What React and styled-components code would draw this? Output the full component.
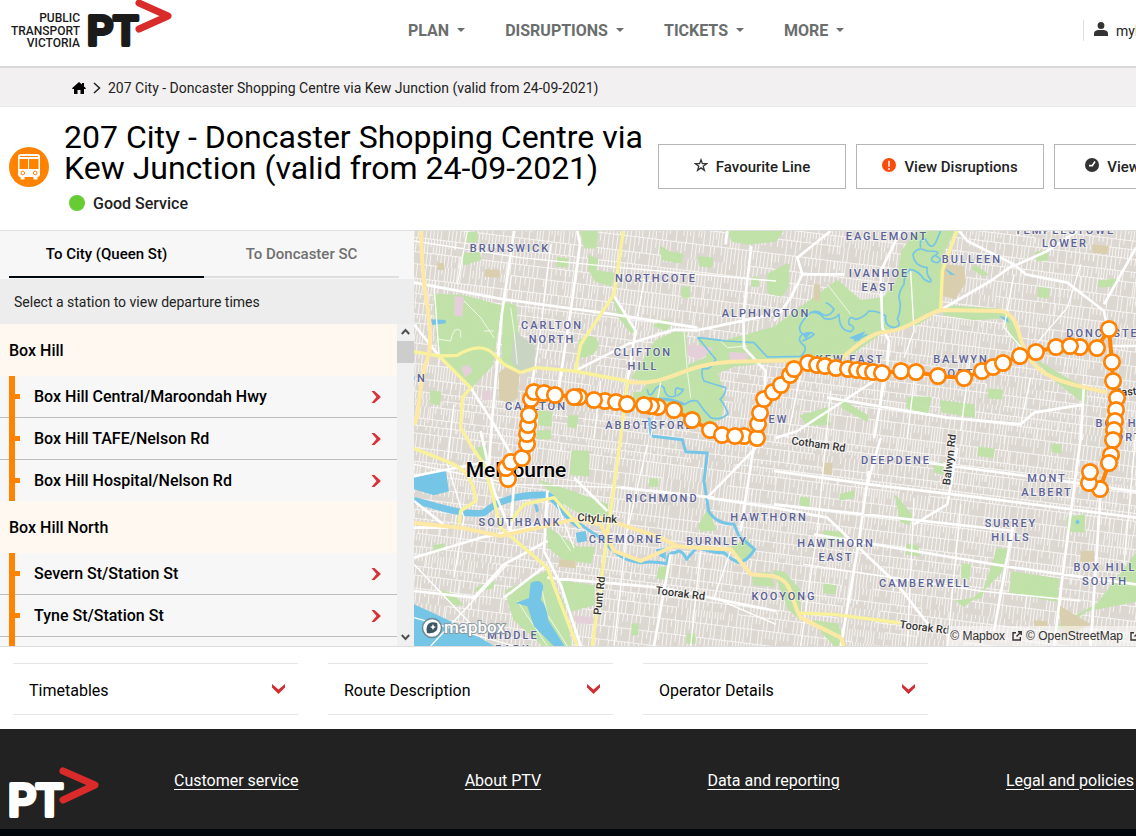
import React from "react";
import styled, { createGlobalStyle } from "styled-components";

const GlobalStyle = createGlobalStyle`
  *, *::before, *::after { box-sizing: border-box; }
  body {
    margin: 0;
    overflow-x: hidden;
    background: #fff;
    color: #222;
    font-family: Roboto, "Liberation Sans", sans-serif;
    font-size: 16px;
  }
  h1, h2, ul { margin: 0; padding: 0; font-weight: 400; }
  ul { list-style: none; }
  a { color: inherit; text-decoration: none; }
  button { font: inherit; color: inherit; cursor: pointer; }
  svg { display: block; flex: none; }
`;

/* ---------- header ---------- */

const Header = styled.header`
  display: flex;
  align-items: flex-start;
  height: 68px;
  padding-left: 9px;
  overflow: hidden;
  border-bottom: 2px solid #d9d9d9;
`;

const MainNav = styled.nav`
  display: flex;
  gap: 40px;
  margin-left: 236px;
  padding-top: 20px;
`;

const NavButton = styled.button`
  display: flex;
  align-items: center;
  gap: 8px;
  padding: 0;
  border: 0;
  background: none;
  color: #6a6e6d;
  font-size: 16px;
  font-weight: 700;
  line-height: 22px;
  white-space: nowrap;
`;

const Caret = styled.span`
  margin-bottom: 3px;
  border: 4px solid transparent;
  border-top-color: #6a6e6d;
  border-bottom: 0;
`;

const Account = styled.a`
  display: flex;
  flex: none;
  align-items: center;
  gap: 8px;
  width: 53px;
  height: 21px;
  margin: 20px 0 0 auto;
  padding-left: 10px;
  border-left: 1px solid #ddd;
  font-size: 14px;
  white-space: nowrap;
`;

const Breadcrumb = styled.nav`
  display: flex;
  align-items: center;
  gap: 7px;
  height: 39px;
  padding: 2px 0 0 72px;
  border-bottom: 1px solid #e6e6e6;
  background: #f2f0f0;
  font-size: 14px;
`;

/* ---------- line heading ---------- */

const LineHeader = styled.section`
  display: flex;
  align-items: flex-start;
  height: 124px;
  padding-left: 9px;
  overflow: hidden;
  border-bottom: 1px solid #dedede;

  > svg { margin-top: 40px; }
`;

const LineInfo = styled.div`
  flex: 0 0 584px;
  margin-left: 15px;
  padding-top: 15px;
`;

const LineTitle = styled.h1`
  color: #000;
  font-size: 32px;
  line-height: 31px;
`;

const Status = styled.p`
  display: flex;
  align-items: center;
  gap: 8px;
  margin: 8px 0 0 5px;
  font-weight: 500;
  line-height: 24px;

  &::before {
    content: "";
    width: 16px;
    height: 16px;
    margin-bottom: 3px;
    border-radius: 50%;
    background: #66cc33;
  }
`;

const Actions = styled.div`
  display: flex;
  flex: none;
  gap: 10px;
  margin: 37px 0 0 10px;
`;

const ActionButton = styled.button`
  display: flex;
  align-items: center;
  justify-content: center;
  gap: 8px;
  width: 188px;
  height: 45px;
  padding: 0;
  border: 1px solid #b5b5b5;
  background: #fff;
  font-size: 15px;
  font-weight: 500;
  white-space: nowrap;
`;

/* ---------- stops and map ---------- */

const Explorer = styled.section`
  display: grid;
  grid-template-columns: 414px 1fr;
  height: 416px;
  border-bottom: 1px solid #dedede;
`;

const StopsPanel = styled.div`
  display: flex;
  flex-direction: column;
  min-height: 0;
  background: #f7f7f7;
`;

const Tabs = styled.div`
  display: flex;
  flex: none;
  height: 48px;
  padding: 0 15px 0 9px;
`;

const Tab = styled.button`
  flex: 1;
  height: 47px;
  padding: 0;
  border: 0;
  border-bottom: 2px solid ${(p) => (p.$active ? "#00070d" : "#dedede")};
  background: none;
  color: ${(p) => (p.$active ? "#000" : "#707070")};
  font-size: 15px;
  font-weight: 500;
`;

const Hint = styled.p`
  flex: none;
  height: 45px;
  margin: 0;
  padding-left: 14px;
  background: #ededed;
  font-size: 14px;
  line-height: 47px;
`;

const ScrollArea = styled.div`
  display: grid;
  grid-template-columns: 1fr 17px;
  flex: 1;
  min-height: 0;
  overflow: hidden;
`;

const StopScroller = styled.div`
  height: 322px;
  overflow: hidden;
`;

const ScrollTrack = styled.div`
  display: flex;
  flex-direction: column;
  align-items: center;
  height: 322px;
  padding: 4px 0 5px;
  background: #f0f0f0;
`;

const ScrollThumb = styled.div`
  width: 17px;
  height: 22px;
  margin: 5px 0 auto;
  background: #cdcdcd;
`;

const Suburb = styled.h2`
  height: 52px;
  padding-left: 9px;
  background: #fff8f1;
  color: #000;
  font-size: 16px;
  font-weight: 500;
  line-height: 54px;
`;

const StopList = styled.ul`
  position: relative;

  &::before {
    content: "";
    position: absolute;
    top: 0;
    bottom: 0;
    left: 9px;
    width: 6px;
    background: #ff8200;
  }
`;

const StopItem = styled.li`
  display: flex;
  align-items: center;
  padding-left: 15px;
  border-bottom: 1px solid #bdbdbd;

  &:last-child { border-bottom: 0; }
  &::before {
    content: "";
    width: 5px;
    height: 5px;
    background: #ff8200;
  }
`;

const StopLink = styled.a`
  display: flex;
  flex: 1;
  align-items: center;
  justify-content: space-between;
  height: 41px;
  padding: 0 16px 0 14px;
  color: #000;
  font-weight: 500;
`;

const MapPane = styled.div`
  position: relative;
  min-width: 0;
  overflow: hidden;
  background: #ddd7d1;

  > svg { width: 100%; height: 100%; }
`;

const Attribution = styled.div`
  position: absolute;
  right: -4px;
  bottom: 0;
  display: flex;
  align-items: center;
  gap: 4px;
  height: 20px;
  padding-left: 4px;
  background: rgba(255, 255, 255, 0.5);
  color: #333;
  font-family: "Liberation Sans", sans-serif;
  font-size: 12px;
  white-space: nowrap;

  a { display: flex; align-items: center; gap: 7px; }
`;

const MapLogo = styled.a`
  position: absolute;
  left: 6px;
  bottom: 6px;
`;

/* ---------- details and footer ---------- */

const Details = styled.section`
  display: flex;
  gap: 30px;
  padding: 16px 0 14px 13px;
`;

const DetailButton = styled.button`
  display: flex;
  flex: 0 0 calc(25vw + 1px);
  align-items: center;
  justify-content: space-between;
  height: 52px;
  padding: 2px 13px 0 16px;
  border: 0;
  border-top: 1px solid #e6e6e6;
  border-bottom: 1px solid #e6e6e6;
  background: none;
  color: #000;
`;

const Footer = styled.footer`
  display: flex;
  align-items: center;
  height: 107px;
  padding: 2px 2px 0 9px;
  border-bottom: 7px solid #00070d;
  background: #222;
  color: #fff;

  > svg { margin-top: 26px; }
`;

const FooterLinks = styled.nav`
  display: flex;
  flex: 1;
  justify-content: space-between;
  margin-left: 75px;

  a {
    text-decoration: underline;
    text-underline-offset: 3px;
  }
`;

/* ---------- icons ---------- */

const PtvLogo = () => (
  <svg width="163" height="52" viewBox="9 0 163 52" role="img" aria-label="Public Transport Victoria">
    <g fill="#1b1b1b" fontFamily="Roboto, sans-serif">
      <g fontSize="12" fontWeight="500" textAnchor="end">
        <text x="80" y="22">PUBLIC</text>
        <text x="80" y="35">TRANSPORT</text>
        <text x="80" y="47">VICTORIA</text>
      </g>
      <text x="87" y="45" fontSize="41" fontWeight="500" stroke="#1b1b1b" strokeWidth="4" strokeLinejoin="round">PT</text>
    </g>
    <path d="M139 3 L168 16 L139 29" fill="none" stroke="#da2b2b" strokeWidth="7" strokeLinecap="round" strokeLinejoin="round" />
  </svg>
);

const FooterLogo = () => (
  <svg width="90" height="54" viewBox="0 0 90 54" role="img" aria-label="PTV">
    <text x="-1" y="50" fill="#fff" stroke="#fff" strokeWidth="4" strokeLinejoin="round" fontFamily="Roboto, sans-serif" fontSize="44" fontWeight="500">PT</text>
    <path d="M54 5 L86 19 L54 34" fill="none" stroke="#da2b2b" strokeWidth="7" strokeLinecap="round" strokeLinejoin="round" />
  </svg>
);

const HomeIcon = () => (
  <svg width="14" height="12" viewBox="0 0 14 12">
    <path d="M7 0 L10 2.600 V1 H12 V4.400 L14 6.200 L13.300 7 H12 V12 H8.500 V8 H5.500 V12 H2 V7 H.7 L0 6.200 Z" fill="#000" />
  </svg>
);

const CrumbArrow = () => (
  <svg width="8" height="12" viewBox="0 0 8 12">
    <path d="M1 1 L6.500 6 L1 11" fill="none" stroke="#222" strokeWidth="1.500" />
  </svg>
);

const UserIcon = () => (
  <svg width="14" height="18" viewBox="0 0 14 18" fill="#333">
    <ellipse cx="7" cy="3.500" rx="3.400" ry="3.500" />
    <path d="M0 14 V11.500 Q0 8.500 4 8 H10 Q14 8.500 14 11.500 V14 Z" />
  </svg>
);

const BusIcon = () => (
  <svg width="40" height="40" viewBox="0 0 40 40">
    <circle cx="20" cy="20" r="20" fill="#ff8200" />
    <path d="M9 9.500 Q9 7 12 7 H28 Q31 7 31 9.500 V27 Q31 30 28.500 30 V32.500 H24.500 V30 H15.500 V32.500 H11.500 V30 Q9 30 9 27 Z" fill="#fff" />
    <path d="M11 9.500 H29" stroke="#ff8200" strokeWidth="1" fill="none" />
    <path d="M10.500 12 H19 V22 H10.500 Z M20 12 H29.500 V22 H20 Z" fill="#ff8200" />
    <circle cx="13.800" cy="26" r="1.800" fill="#fff" stroke="#ff8200" />
    <circle cx="26.200" cy="26" r="1.800" fill="#fff" stroke="#ff8200" />
  </svg>
);

const StarIcon = () => (
  <svg width="14" height="18" viewBox="0 0 14 18">
    <path d="M7 1.800 L8.400 5.600 L12.500 5.700 L9.200 8.200 L10.400 12.300 L7 9.900 L3.600 12.300 L4.800 8.200 L1.500 5.700 L5.600 5.600 Z" fill="none" stroke="#333" strokeWidth="1.300" />
  </svg>
);

const AlertIcon = () => (
  <svg width="14" height="18" viewBox="0 0 14 18">
    <circle cx="7" cy="7" r="7" fill="#fa4b0c" />
    <path d="M7 2.800 V8.800" stroke="#fff" strokeWidth="1.500" />
    <circle cx="7" cy="11" r=".9" fill="#fff" />
  </svg>
);

const ClockIcon = () => (
  <svg width="14" height="18" viewBox="0 0 14 18">
    <circle cx="7" cy="7" r="7" fill="#333" />
    <path d="M10 3.500 L7.300 7.600 H4" stroke="#fff" strokeWidth="1.600" fill="none" />
  </svg>
);

const RedArrow = () => (
  <svg width="10" height="12" viewBox="0 0 10 12">
    <path d="M.5 0 H3.500 L9.500 5.500 V6.500 L3.500 12 H.5 L5.500 6 Z" fill="#d8323a" />
  </svg>
);

const RedDown = () => (
  <svg width="13" height="12" viewBox="0 0 13 12">
    <path d="M0 0 L6.500 5.500 L13 0 V3.500 L6.500 10 L0 3.500 Z" fill="#cf2e32" />
  </svg>
);

const ScrollArrow = ({ down }) => (
  <svg width="9" height="8" viewBox="0 0 9 8">
    <path d={down ? "M.8 2 L4.500 6 L8.200 2" : "M.8 6 L4.500 2 L8.200 6"} fill="none" stroke="#505050" strokeWidth="2" />
  </svg>
);

const ExternalIcon = () => (
  <svg width="10" height="10" viewBox="0 0 10 10">
    <path d="M4 1.700 H1 V9 H8.300 V6 M6 .8 H9.200 V4 M9 1 L4.500 5.500" fill="none" stroke="#333" strokeWidth="1.400" />
  </svg>
);

/* ---------- map drawing (terrain units are a third of a pixel) ---------- */

function buildStreets() {
  let seed = 11;
  const rnd = () => {
    seed = (seed * 16807) % 2147483647;
    return seed / 2147483647;
  };
  let d = "";
  let v = -330;
  while (v < 1320) {
    const h = 20 + Math.round(rnd() * 26);
    let u = -60;
    while (u < 2400) {
      const block = 70 + rnd() * 150;
      const step = 8 + rnd() * 6;
      if (rnd() > 0.1) d += `M${u | 0} ${v}h${block | 0}`;
      for (let x = u; x < u + block; x += step) {
        const cut = rnd() < 0.35 ? h * 0.45 : 0;
        if (rnd() > 0.1) d += `M${x | 0} ${v}v${(h - cut) | 0}`;
      }
      u += block;
    }
    v += h;
  }
  return d;
}
const STREETS = buildStreets();

const PARKS = [
  "M158 5h30v27h-30z M148 70l47-5 5 20-50 15z M60 190l90 5 112 30-12 75-15 100-65 70-70-70-30-60z",
  "M270 215l35 10 5 75 20 45-10 75-55-20z M500 0h50l-5 50-32 0z M525 75l25 10-5 35 55 8-8 35-47-13-20-35z M598 195l20 40 45 65-10 5-40-50z",
  "M430 80l30 5-2 23-28-4z M740 48l30 17 35 5-5 25-55-10z M855 78l40 4-3 26-34-4z M945 0h160l-20 30-85 8-45-8z M1015 140h18v25h-18z M1062 130l60-30v65l-20 30-40-10z M805 170h20v28h-20z",
  "M495 330Q540 300 552 340Q545 375 500 378z M655 440l70-110 55-25h35l5 115-60 35-60-5z M720 285l30-18 25 10-20 20z",
  "M850 320l80 10 150-40 80-60 110-80 70 60 70-10 40-50 15-90 45-60h110l-40 80v155l-70 45-100 20-100 70-160 15-190 20-50 20 20 70-10 70-60 10-80-40-100-50 30-35 120-50 50-20z",
  "M375 540l38 5-3 40-35-5z M465 555l25 2-5 33-23-5z M50 480l30 5-5 35-25-5z M370 600h40v22h-40z M660 485h30v30l-30-10z",
  "M1600 225l160 10 45 35 15 75-20-15-30-70-90 5-90-15z M1865 65l35-5v25l-30 5z M1875 170l30 5-5 25-28-5z M2055 150l50-5-5 20-45 2z M1870 390l100 60 50 20-10 45-90-70z M1685 105l35 25-15 2-30-20z",
  "M1480 500l70 0-10 50-60-20z M1580 510l100 12v35l-95-15z M1725 475l38 3v25l-38-3z M1160 555l85-25v50l-65 0z M1280 505l80 50v15l-75-40z",
  "M190 651l25-5 5 35-20 5z M475 660l48 2v72l-53-4z M380 751l90 30 110 40v45l-25 15-115-70z M400 890l90 60h50l-10 45-80-10-45-35z M275 1080l125-60 50 100 20 125h-80l-90-80z M440 1050l100 15v55l-70 20-10-30z",
  "M855 885l25-45 25 55-45 5z M950 950l50-25 15 40-35 25z M1015 1030l50-5 15 40-60-5z M190 1070l50-15-5 15-50 10z M60 945l30-5-5 20-25 0z M85 1080l30 10 30 30-30 0z M735 1010l30 0-5 35-30-5z M820 1210h22v26h-22z M655 1180h16v30h-16z M708 745h22v20h-22z",
  "M1695 650l45 5-4 23-42-5z M1960 860l50-8v50l-48-2z M1795 1023l138 22-5 65-140-25z M1940 1180l110-60 116-150v140l-150 30-90 60z M1630 1110l70-10 20-50 30-95h30l-20 70-60 60-50 40z M1445 795l50 60-10 25-25-10z M1280 790l40-8-2 18-40 5z M1160 800l25 3v22l-27-3z M1230 1060l35 5-3 22-32-2z M1560 700l25-5 2 35-25-8z M1915 640l25 3v22l-25-4z M1645 1000l24 2-5 40-20-4z",
  "M1200 1170l70 10 25 65h-30l-40-40z M1080 1020l30 5 45 50 5 90-35-30z M1480 940l30 5 5 28-38-5z M1230 900l55 5-3 25-50-5z",
].join(" ");

const PARK_PATHS = "M75 325L110 330Q120 280 140 300L140 320 M150 210L200 260L240 320 M210 300L240 300 M290 230L300 300L310 400 M810 300L820 420L830 500 M920 330L940 350L1000 345 M1240 160L1310 250 M400 800L470 850 M430 900L470 960 M310 1110L400 1245 M380 1060L400 1150L460 1245";

const GREY_GREEN = "M300 300l65 45-5 65-40 15-30-35z";
const TAN =
  "M255 425q30-30 62-5l-5 80q-28 25-57 5z M1590 100l60 5 5 50-30 50-40-10z M212 115l45 3v22l-45-3z M70 95l20 2v20h-20z M2035 40l50 5-5 25-45-5z M1230 695h25v35h-25z M2000 960h40v32h-40z M1930 1120l100 60-80 40z M1860 1168l40 3v15h-40z M435 985l50 5v22l-50-5z M1200 160h18v50h-18z";
const PINK =
  "M122 195l28 3-5 60-25-5z M140 410l25-10 10 20-20 20z M820 340l80 10-40 35-40-10z M945 362l60 5-8 25-50-5z M205 480h25v28h-25z M485 1155l50 3v22l-50-3z";

const YARRA =
  "M812 521 Q830 505 850 510 Q870 540 890 560 Q920 570 942 548 Q935 525 918 505 Q935 490 935 470 Q900 460 870 450 Q860 430 866 412 Q890 420 905 385 L852 320 Q900 325 935 330 L1020 335 L1060 378 L1160 376 Q1178 360 1172 345 Q1145 325 1165 310 Q1190 300 1200 310 Q1190 320 1165 330 M1165 308 Q1140 290 1190 245 Q1210 235 1225 250 Q1245 260 1260 235 Q1250 220 1235 215 M1190 245 Q1215 240 1230 262 Q1260 270 1275 250 Q1275 300 1310 302 Q1330 290 1305 280 Q1300 250 1325 265 Q1350 260 1365 240 Q1395 240 1415 255 Q1410 285 1440 290 Q1465 285 1450 265 Q1465 230 1455 200 Q1455 180 1470 160 Q1470 125 1490 115 Q1515 120 1530 145 Q1555 160 1550 145 Q1535 130 1540 110 Q1500 105 1497 70 Q1510 45 1540 60 Q1590 60 1560 75 Q1540 90 1570 95 Q1590 85 1565 75 M1520 50 Q1515 20 1535 25 Q1550 60 1565 35 L1580 0 M1320 330 L1360 310 M700 475 Q705 505 720 480 Q735 455 750 470 Q755 505 785 495 Q780 460 800 475 Q820 470 790 495";
const RIVER_LOWER =
  "M812 521 Q770 500 720 505 M705 560 L712 615 L805 626 L815 662 L880 666 L870 750 L884 840 Q905 878 960 880 L975 915 L1022 955 Q1000 990 975 995 Q950 985 930 965 Q890 965 850 948 Q830 970 818 985 Q800 950 785 965 Q760 960 760 998 Q720 990 680 995 Q640 990 620 976 Q580 950 570 925 Q540 910 500 880";

const WHITE_MAJOR =
  "M300 0L262 260L235 560L225 700 M0 155L270 205L600 250L850 290 M490 0L498 40L470 240L430 500 M480 421L640 340L780 296L850 298L1086 248 M600 195L665 300L640 450L635 520 M940 0L935 40 M1012 45L988 250L990 350L1055 420L1050 520 M75 375L0 280 M1080 270L1130 200L1165 130L1290 130 M1165 130L1150 80L1250 0 M1460 0L1400 120L1405 290L1425 330L1420 400L1380 621 M1635 0L1660 30L1800 100L1835 130L1960 155L2070 240L2085 320 M1800 105L1900 60L1990 0 M2070 220L2166 50 M1580 237L1730 150L1800 100 M1085 621L1150 600L1380 450 M1240 500L1600 560L1820 580L1860 545L2010 520 M2010 460L2000 621L1950 1000L1920 1245 M0 735L230 690 M170 470L240 580L330 740 M0 810L100 890L0 890 M0 980L200 920L400 880 M200 600L240 780L290 900 M0 1080L180 1100L270 1000L400 930 M270 1100L400 1000 M400 780L390 960L440 1060L500 1245 M400 1040L740 1070L1086 1140 M770 970L720 1245 M1020 640L980 900 M1035 640L880 800 M880 800L1080 830L1240 860L1450 1060L1550 1190 M1080 720L1365 760L1700 800L2166 860 M1365 720L1330 960L1280 1245 M1400 621L1360 760 M1500 690L1800 730L1980 755L2166 782 M1200 910L1500 960L1800 1010L2166 1060 M1630 650L1600 820L1500 880 M1800 870L1740 1200 M2085 345L2166 345 M2060 780L2030 1245 M300 760L290 900 M480 740L580 840 M620 770L900 800 M1080 820L1800 900";
const WHITE_MID =
  "M60 160L75 370 M410 40L380 300L350 500 M0 30L320 80L620 110L1086 150 M160 0L130 160 M690 150L660 310 M360 410L330 621 M560 450L540 621 M740 455L710 621 M1470 380L1500 300L1490 120 M1840 370L1770 290L1800 130 M1840 370L1960 230L2000 100 M1480 621L1500 450 M1640 600L1670 370 M1820 580L1850 440 M1160 430L1120 621 M1250 480L1210 900L1160 1245 M1500 800L1480 1245 M1640 820L1600 1245 M2166 600L2130 1000 M120 520L100 700L150 860L120 1040 M0 700L300 760L620 770 M650 800L600 1245 M860 960L830 1245 M950 960L900 1100L1086 1180 M0 1160L300 1245 M50 1245L280 1000 M0 1000L190 1200 M430 820L480 950 M700 640L640 900 M1170 1000L1700 1080L2000 1110";

const YELLOW =
  "M320 425L365 410L480 420L640 450 M75 375L130 373Q200 330 240 370L270 400L320 425 M0 362L75 375L170 470L145 500L140 590L175 650L210 700L235 790L260 890L400 1010Q440 1120 490 1245 M628 0L600 190L500 340L485 415 M640 455L620 621L590 840L565 1020L535 1245 M0 652L100 692Q180 720 185 810L140 840L135 880 M290 870L330 820L420 800L500 890 M1150 1146L1260 1150L1460 1176 M1628 0L1585 120L1580 237";
const MOTORWAY =
  "M22 0C20 200 60 250 45 370C10 450 20 560 0 580 M640 452C760 470 800 400 950 392L1280 385C1340 330 1380 305 1410 303C1480 300 1530 250 1580 237L1760 240C1820 250 1810 330 1840 370C1880 450 1980 460 2080 485 M0 876L140 890L260 915L480 866L560 880L600 960L680 990L780 945L850 950L950 955L1010 1030L1080 1036C1140 1050 1130 1110 1160 1160L1280 1220L1290 1245 M480 866L560 860L740 920L790 945";

const LABELS = [
  [510, 252, "BRUNSWICK"], [656, 282, "NORTHCOTE"], [552, 329, "CARLTON"], [552, 343, "NORTH"],
  [643, 356, "CLIFTON"], [643, 370, "HILL"], [766, 317, "ALPHINGTON"], [887, 240, "EAGLEMONT"],
  [879, 277, "IVANHOE"], [879, 291, "EAST"], [972, 263, "BULLEEN"], [1065, 234, "TEMPLESTOWE"],
  [1065, 247, "LOWER"], [1107, 337, "DONCASTER"], [850, 363, "KEW EAST"], [961, 363, "BALWYN"],
  [961, 377, "NORTH"], [536, 410, "CARLTON"], [650, 429, "ABBOTSFORD"], [774, 423, "KEW"],
  [896, 464, "DEEPDENE"], [662, 502, "RICHMOND"], [520, 526, "SOUTHBANK"], [626, 543, "CREMORNE"],
  [717, 545, "BURNLEY"], [769, 521, "HAWTHORN"], [836, 547, "HAWTHORN"], [836, 561, "EAST"],
  [925, 587, "CAMBERWELL"], [784, 600, "KOOYONG"], [1047, 482, "MONT"], [1047, 496, "ALBERT"],
  [1011, 527, "SURREY"], [1011, 541, "HILLS"], [1105, 571, "BOX HILL"], [1105, 585, "SOUTH"],
  [513, 639, "MIDDLE"], [513, 653, "PARK"], [1127, 427, "BOX HILL"], [1129, 441, "NORTH"], [417, 382, "ON"],
];

const ROUTE = [
  [508, 479], [506, 468], [511, 462], [522, 458], [527, 444], [527, 434], [528, 425], [529, 415], [531, 399],
  [534, 392], [544, 393], [555, 395], [579, 397], [574, 397], [605, 401], [594, 400], [616, 402], [627, 404],
  [658, 407], [651, 406], [644, 405], [674, 410], [692, 420], [710, 430], [722, 435], [744, 436], [735, 436],
  [757, 438], [758, 424], [760, 413], [764, 399], [773, 392], [781, 385], [790, 375], [794, 369], [808, 363],
  [817, 365], [825, 366], [836, 368], [848, 369], [857, 370], [865, 371], [873, 372], [882, 373], [901, 371],
  [916, 372], [938, 376], [964, 378], [982, 371], [993, 367], [1003, 363], [1020, 356], [1036, 352],
  [1056, 347], [1080, 347], [1070, 346], [1097, 348], [1109, 329], [1112, 362], [1113, 381], [1117, 398],
  [1116, 410], [1115, 421], [1114, 430], [1113, 440], [1111, 455], [1109, 463], [1100, 489], [1089, 483], [1090, 472],
];

const RouteMap = () => (
  <svg viewBox="0 0 722 415" preserveAspectRatio="xMinYMin slice" role="img" aria-label="Map of route 207">
    <g transform="scale(.33333)" fill="none" strokeLinejoin="round">
      <path d={STREETS} transform="rotate(7)" stroke="#fff" strokeWidth="2.400" opacity=".85" />
      <path d={PARKS} fill="#bfe2a6" stroke="#bfe2a6" strokeWidth="5" opacity=".95" />
      <path d={GREY_GREEN} fill="#c9d5c2" />
      <path d={TAN} fill="#d9cfae" />
      <path d={PINK} fill="#e5d0d9" />
      <path d={PARK_PATHS} stroke="#f1f8ea" strokeWidth="3" />
      <path
        d="M0 741l95-25 10 65-45 12-60-18z M0 1120l130 60 110 65H0z M305 1116l40-15 5-45q30-15 38 10l-8 40q20 20 22 60l50 80h-32l-60-60-20-60z M485 905l30-5 5 30-30 5z M50 265l45 2v10l-40 5z M1305 320l50-20-20 30z M1755 255l25 5 5 15-15-8z M1590 110l35 22h-15z M1990 865l8 8-8 8-6-8z M360 820l10 0 5 20-8 5z M725 955l30-5 0 35-20-10z M1165 310l30-8-20 22z"
        fill="#75c5e6"
      />
      <path d="M0 808C80 828 150 855 210 845C260 800 330 790 400 792C440 812 450 861 500 886" stroke="#75c5e6" strokeWidth="20" />
      <path d={YARRA} stroke="#75c5e6" strokeWidth="5" />
      <path d={RIVER_LOWER} stroke="#75c5e6" strokeWidth="9" />
      <path d={WHITE_MID} stroke="#fff" strokeWidth="4" />
      <path d={WHITE_MAJOR} stroke="#fff" strokeWidth="8" />
      <path d={YELLOW} stroke="#f9f29a" strokeWidth="10" />
      <path d={MOTORWAY} stroke="#fde8a4" strokeWidth="12" />
    </g>
    <g transform="translate(-414 -231)" fontFamily="Roboto, sans-serif" textAnchor="middle">
      <g fill="#5a6298" stroke="#fff" strokeOpacity=".4" strokeWidth="2" paintOrder="stroke" fontSize="11" fontWeight="500" letterSpacing="2">
        {LABELS.map(([x, y, label], i) => (
          <text key={i} x={x} y={y}>{label}</text>
        ))}
      </g>
      <g fill="#333" stroke="#fff" strokeOpacity=".7" strokeWidth="2" paintOrder="stroke" fontSize="11" fontWeight="500">
        <text x="597" y="522" transform="rotate(3 597 522)">CityLink</text>
        <text x="818" y="448" transform="rotate(8 818 448)">Cotham Rd</text>
        <text x="680" y="597" transform="rotate(7 680 597)">Toorak Rd</text>
        <text x="924" y="631" transform="rotate(7 924 631)">Toorak Rd</text>
        <text x="603" y="596" transform="rotate(-84 603 596)">Punt Rd</text>
        <text x="953" y="460" transform="rotate(-83 953 460)">Balwyn Rd</text>
        <text x="1134" y="395" transform="rotate(-5 1134 395)">Eastern</text>
      </g>
      <text x="516" y="477" fontSize="21" fontWeight="500" fill="#000" stroke="#fff" strokeOpacity=".6" strokeWidth="2" paintOrder="stroke">Melbourne</text>
      <polyline points={ROUTE.map((p) => p.join(",")).join(" ")} fill="none" stroke="#ff8200" strokeWidth="4" strokeLinejoin="round" />
      {ROUTE.map(([x, y], i) => (
        <circle key={i} cx={x} cy={y} r="7.700" fill="#fff" stroke="#ff8200" strokeWidth="2.700" />
      ))}
    </g>
  </svg>
);

const MapboxLogo = () => (
  <svg width="92" height="24" viewBox="0 0 92 24">
    <circle cx="12" cy="12" r="9.500" fill="#fff" stroke="#6f8792" strokeWidth="1.500" />
    <path d="M7 17 Q5.500 10 9 7.500 Q12 5.500 17 7 Q18.500 12 16 15 Q13 18 7 17 Z" fill="#3d5560" />
    <path d="M13 8 L14 10.200 L16 11 L14 12 L13 14 L12 12 L10 11 L12 10.200 Z" fill="#fff" />
    <text x="24" y="17" fill="#fff" stroke="#8a9aa2" strokeWidth="2" paintOrder="stroke" fontFamily="Roboto, sans-serif" fontSize="17" fontWeight="500">mapbox</text>
  </svg>
);

/* ---------- page ---------- */

const NAV = ["PLAN", "DISRUPTIONS", "TICKETS", "MORE"];
const SUBURBS = [
  { name: "Box Hill", stops: ["Box Hill Central/Maroondah Hwy", "Box Hill TAFE/Nelson Rd", "Box Hill Hospital/Nelson Rd"] },
  { name: "Box Hill North", stops: ["Severn St/Station St", "Tyne St/Station St", ""] },
];
const DETAILS = ["Timetables", "Route Description", "Operator Details"];
const FOOTER_LINKS = ["Customer service", "About PTV", "Data and reporting", "Legal and policies"];
const LINE_NAME = "207 City - Doncaster Shopping Centre via Kew Junction (valid from 24-09-2021)";

export default function App() {
  return (
    <>
      <GlobalStyle />
      <Header>
        <PtvLogo />
        <MainNav>
          {NAV.map((item) => (
            <NavButton key={item}>{item}<Caret /></NavButton>
          ))}
        </MainNav>
        <Account href="#myki"><UserIcon />myki</Account>
      </Header>
      <Breadcrumb aria-label="Breadcrumb">
        <a href="#home" aria-label="Home"><HomeIcon /></a>
        <CrumbArrow />
        <span>{LINE_NAME}</span>
      </Breadcrumb>
      <main>
        <LineHeader>
          <BusIcon />
          <LineInfo>
            <LineTitle>{LINE_NAME}</LineTitle>
            <Status>Good Service</Status>
          </LineInfo>
          <Actions>
            <ActionButton><StarIcon />Favourite Line</ActionButton>
            <ActionButton><AlertIcon />View Disruptions</ActionButton>
            <ActionButton><ClockIcon />View Timetable</ActionButton>
          </Actions>
        </LineHeader>
        <Explorer>
          <StopsPanel>
            <Tabs role="tablist">
              <Tab role="tab" aria-selected="true" $active>To City (Queen St)</Tab>
              <Tab role="tab" aria-selected="false">To Doncaster SC</Tab>
            </Tabs>
            <Hint>Select a station to view departure times</Hint>
            <ScrollArea>
              <StopScroller>
                {SUBURBS.map((suburb) => (
                  <React.Fragment key={suburb.name}>
                    <Suburb>{suburb.name}</Suburb>
                    <StopList>
                      {suburb.stops.map((stop) => (
                        <StopItem key={stop}>
                          <StopLink href="#stop">{stop}<RedArrow /></StopLink>
                        </StopItem>
                      ))}
                    </StopList>
                  </React.Fragment>
                ))}
              </StopScroller>
              <ScrollTrack>
                <ScrollArrow />
                <ScrollThumb />
                <ScrollArrow down />
              </ScrollTrack>
            </ScrollArea>
          </StopsPanel>
          <MapPane>
            <RouteMap />
            <MapLogo href="#mapbox" aria-label="Mapbox"><MapboxLogo /></MapLogo>
            <Attribution>
              <a href="#mapbox-terms">© Mapbox <ExternalIcon /></a>
              <a href="#osm">© OpenStreetMap <ExternalIcon /></a>
            </Attribution>
          </MapPane>
        </Explorer>
        <Details>
          {DETAILS.map((item) => (
            <DetailButton key={item} aria-expanded="false">{item}<RedDown /></DetailButton>
          ))}
        </Details>
      </main>
      <Footer>
        <FooterLogo />
        <FooterLinks>
          {FOOTER_LINKS.map((item) => (
            <a key={item} href="#footer">{item}</a>
          ))}
        </FooterLinks>
      </Footer>
    </>
  );
}
